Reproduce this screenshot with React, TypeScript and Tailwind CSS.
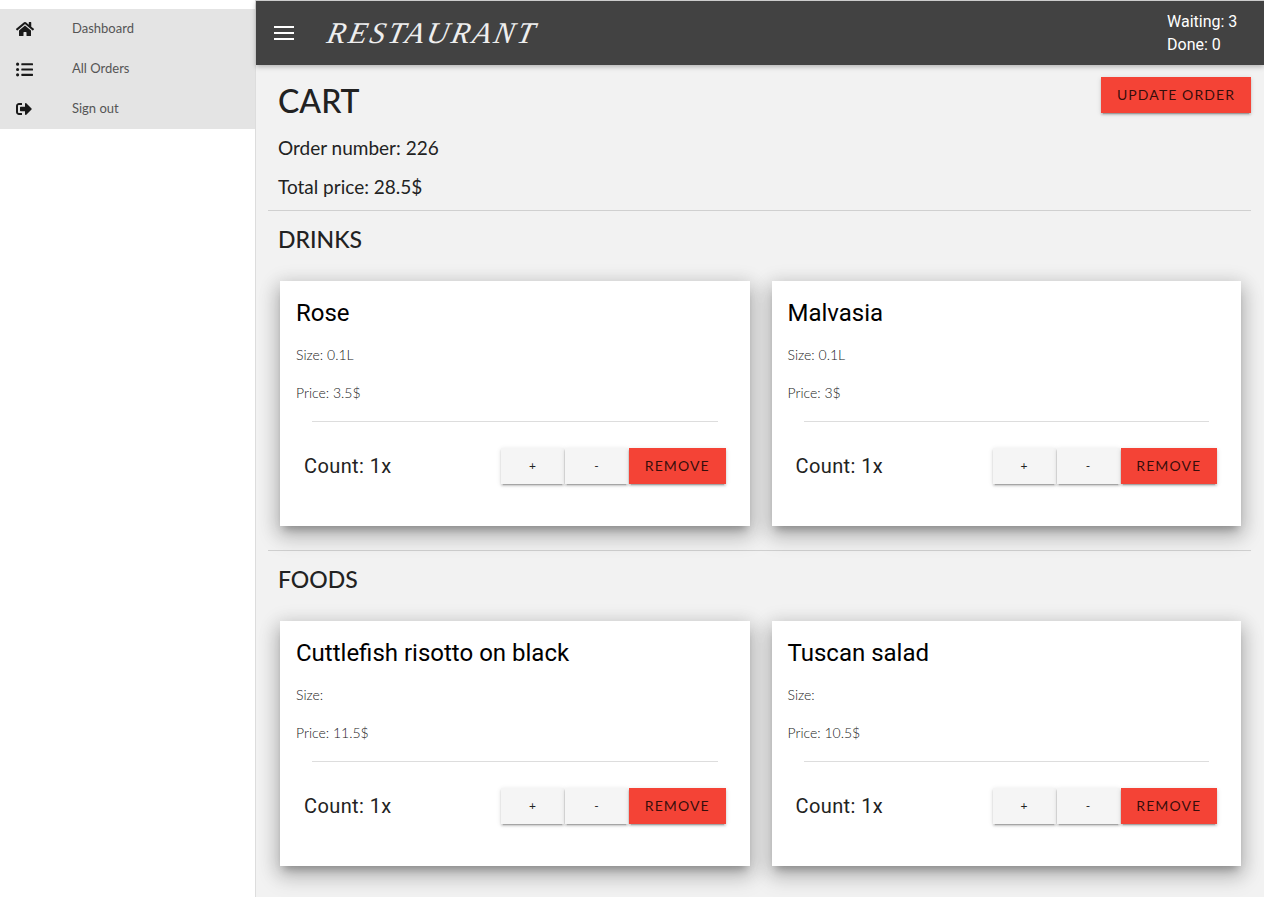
import { FaHome, FaListUl, FaSignOutAlt } from 'react-icons/fa';
import type { ReactNode } from 'react';

const navItems: { label: string; icon: ReactNode }[] = [
  { label: 'Dashboard', icon: <FaHome className="w-[18px] h-[18px]" /> },
  { label: 'All Orders', icon: <FaListUl className="w-[17px] h-[17px]" /> },
  { label: 'Sign out', icon: <FaSignOutAlt className="w-4 h-4" /> },
];

const drinks = [
  { name: 'Rose', size: '0.1L', price: '3.5$' },
  { name: 'Malvasia', size: '0.1L', price: '3$' },
];

const foods = [
  { name: 'Cuttlefish risotto on black', size: '', price: '11.5$' },
  { name: 'Tuscan salad', size: '', price: '10.5$' },
];

function ItemCard({ item }: { item: { name: string; size: string; price: string } }) {
  return (
    <div className="h-[245px] bg-white px-4 pt-4 shadow-[0_10px_20px_2px_rgba(0,0,0,0.16),0_4px_18px_3px_rgba(0,0,0,0.14),0_7px_8px_-4px_rgba(0,0,0,0.25)] font-['Roboto',sans-serif]">
      <h3 className="text-2xl leading-[32px] text-black">{item.name}</h3>
      <p className="mt-[15px] h-[22px] text-sm leading-[22px] font-light font-['Lato',sans-serif] text-[#222]">Size: {item.size}</p>
      <p className="mt-[16px] h-[22px] text-sm leading-[22px] font-light font-['Lato',sans-serif] text-[#222]">Price: {item.price}</p>
      <div className="mx-4 mt-[17px] h-px bg-[#ddd]" />
      <div className="mt-[26px] flex items-center justify-between pl-2 pr-2">
        <span className="text-xl leading-[36px] tracking-[0.4px] text-[#222]">Count: 1x</span>
        <div className="flex gap-px font-['Lato',sans-serif]">
          <button className="h-9 w-[63px] bg-[#f5f5f5] text-xs text-[#222] shadow-[0_2px_2px_0_rgba(0,0,0,0.14),0_1px_5px_0_rgba(0,0,0,0.12),0_3px_1px_-2px_rgba(0,0,0,0.2)]">+</button>
          <button className="h-9 w-[63px] bg-[#f5f5f5] text-xs text-[#222] shadow-[0_2px_2px_0_rgba(0,0,0,0.14),0_1px_5px_0_rgba(0,0,0,0.12),0_3px_1px_-2px_rgba(0,0,0,0.2)]">-</button>
          <button className="h-9 w-[96.5px] bg-[#f44336] text-sm tracking-[1.1px] text-black/80 shadow-[0_2px_2px_0_rgba(0,0,0,0.14),0_1px_5px_0_rgba(0,0,0,0.12),0_3px_1px_-2px_rgba(0,0,0,0.2)]">REMOVE</button>
        </div>
      </div>
    </div>
  );
}

function Section({ title, items }: { title: string; items: typeof drinks }) {
  return (
    <section>
      <div className="border-t border-[#d0d0d0] pl-2.5">
        <h2 className="h-[70px] pt-3 text-[23px] leading-[32px] font-['Lato',sans-serif] font-medium text-[#222]">{title}</h2>
      </div>
      <div className="grid grid-cols-2 gap-[22px] pl-3 pr-2.5">
        {items.map((item) => (
          <ItemCard key={item.name} item={item} />
        ))}
      </div>
    </section>
  );
}

export default function App() {
  return (
    <div className="flex h-screen overflow-hidden bg-[#f2f2f2] font-['Lato',sans-serif]">
      {/* Sidebar */}
      <aside className="w-64 shrink-0 border-r border-[#ddd] bg-white pt-[9px]">
        <ul className="bg-[#e4e4e4]">
          {navItems.map((nav) => (
            <li key={nav.label} className="flex h-10 items-center text-[13px] text-[#555]">
              <span className="flex w-[72px] justify-start pl-4 text-[#1a1a1a]">{nav.icon}</span>
              <span>{nav.label}</span>
            </li>
          ))}
        </ul>
      </aside>

      <div className="flex min-w-0 flex-1 flex-col">
        {/* Header */}
        <header className="relative z-10 flex h-[65px] shrink-0 items-center justify-between border-t border-[#ccc] bg-[#424242] pl-[18px] pr-7 text-white shadow-[0_2px_5px_0_rgba(0,0,0,0.26)]">
          <div className="flex items-center">
            <svg width="20" height="14" viewBox="0 0 20 14" fill="white" className="mr-[34px]">
              <rect x="0" y="0" width="20" height="2" />
              <rect x="0" y="6" width="20" height="2" />
              <rect x="0" y="12" width="20" height="2" />
            </svg>
            <span className="origin-left text-[30px] leading-none italic font-['Liberation_Serif',serif] tracking-[3px] text-[#eee] [transform:skewX(-12deg)]">RESTAURANT</span>
          </div>
          <div className="w-[69px] whitespace-nowrap font-['Roboto',sans-serif] text-base leading-[23px]">
            <div>Waiting: 3</div>
            <div>Done: 0</div>
          </div>
        </header>

        {/* Main */}
        <main className="pl-3 pr-[13px]">
          <div className="flex justify-between pl-2.5 pt-3">
            <div>
              <h1 className="h-12 text-[32px] leading-[48px] font-medium text-[#222]">CART</h1>
              <p className="mt-[11px] text-[19px] leading-[24px] text-[#222]">Order number: 226</p>
              <p className="mt-[15px] h-[35px] text-[19px] leading-[24px] text-[#222]">Total price: 28.5$</p>
            </div>
            <button className="h-9 w-[150px] bg-[#f44336] text-sm tracking-[1.1px] text-black/80 shadow-[0_2px_2px_0_rgba(0,0,0,0.14),0_1px_5px_0_rgba(0,0,0,0.12),0_3px_1px_-2px_rgba(0,0,0,0.2)]">UPDATE ORDER</button>
          </div>
          <Section title="DRINKS" items={drinks} />
          <div className="mt-6">
            <Section title="FOODS" items={foods} />
          </div>
        </main>
      </div>
    </div>
  );
}
